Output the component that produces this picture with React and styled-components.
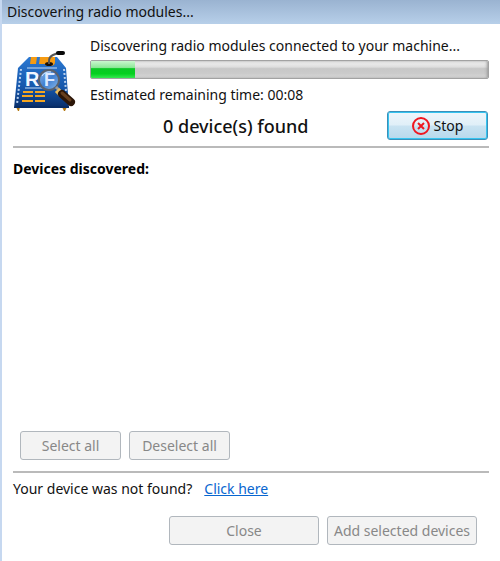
import styled, { createGlobalStyle } from 'styled-components';

const GlobalStyle = createGlobalStyle`
  * {
    box-sizing: border-box;
  }
  body {
    margin: 0;
    background: #ffffff;
    color: #111111;
    font-family: 'Noto Sans', 'Open Sans', sans-serif;
    font-size: 14px;
    line-height: 20px;
  }
`;

const Window = styled.main`
  display: flex;
  flex-direction: column;
  min-height: 100vh;
  border-left: 2px solid #c6d8f0;
`;

const TitleBar = styled.h1`
  height: 24px;
  margin: 0;
  padding: 2px 5px;
  background: linear-gradient(#9ab3d1, #b7cfe9);
  font-size: 14px;
  font-weight: normal;
  line-height: 20px;
`;

const Content = styled.div`
  display: flex;
  flex: 1;
  flex-direction: column;
  padding: 12px 11px 16px;
`;

const Status = styled.section`
  display: flex;
  gap: 13px;
  padding-bottom: 6px;
  border-bottom: 2px solid #bababa;
`;

const Logo = styled.svg`
  flex: none;
  width: 64px;
  height: 64px;
  margin-top: 13px;
`;

const Progress = styled.div`
  flex: 1;
  min-width: 0;
`;

const Label = styled.label`
  display: block;
  height: 24px;
  white-space: nowrap;
`;

const Bar = styled.progress`
  display: block;
  width: 100%;
  height: 19px;
  appearance: none;
  border: 1px solid #a2a2a2;
  border-radius: 2px;
  overflow: hidden;

  &::-webkit-progress-bar {
    background: linear-gradient(#f2f2f2 0, #dedede 35%, #c7c7c7 45%, #cbcbcb 75%, #dddddd);
    box-shadow: inset -1px 0 3px #999999;
  }
  &::-webkit-progress-value {
    background: linear-gradient(#c9f7ce 0, #8fe89a 38%, #0bc725 45%, #05d020 75%, #35e850);
  }
`;

const Remaining = styled.p`
  margin: 6px 0;
`;

const Summary = styled.div`
  display: flex;
  align-items: center;
  justify-content: space-between;
  padding: 0 1px 0 73px;
`;

const Found = styled.strong`
  font-size: 18px;
  font-weight: 500;
  line-height: 28px;
`;

const Button = styled.button`
  display: flex;
  align-items: center;
  justify-content: center;
  gap: 4px;
  width: ${({ $width }) => $width}px;
  height: 29px;
  padding: 0;
  border: 1px solid #b1b7bd;
  border-radius: 3px;
  background: #f3f3f3;
  color: #888888;
  font: inherit;
  white-space: nowrap;
`;

const StopButton = styled(Button)`
  border: 1px solid #3c8fb8;
  background: linear-gradient(#eef6fb 0, #e0eff8 48%, #c9e3f2 52%, #b7d9ec);
  box-shadow: inset 0 0 0 1px #35c4f0;
  color: #111111;
`;

const Devices = styled.section`
  display: flex;
  flex: 1;
  flex-direction: column;
  justify-content: space-between;
  padding: 11px 0 11px;
  border-bottom: 2px solid #bababa;
`;

const Heading = styled.h2`
  margin: 0;
  color: #000000;
  font-size: 14px;
  line-height: 20px;
`;

const Actions = styled.div`
  display: flex;
  gap: 8px;
  padding: 0 7px;
`;

const Help = styled.p`
  display: flex;
  gap: 12px;
  margin: 6px 0 17px;
`;

const Link = styled.a`
  color: #0866d0;
`;

const Footer = styled(Actions)`
  justify-content: flex-end;
  padding: 0 12px;
`;

const LogoIcon = () => (
  <Logo viewBox="0 0 64 64" aria-hidden="true">
    <defs>
      <linearGradient id="body" x1="0" y1="0" x2="0" y2="1">
        <stop offset="0" stopColor="#2c79d2" />
        <stop offset="0.6" stopColor="#1556aa" />
        <stop offset="1" stopColor="#092d68" />
      </linearGradient>
      <linearGradient id="lens" x1="0" y1="0" x2="1" y2="1">
        <stop offset="0" stopColor="#8fb8ea" />
        <stop offset="0.5" stopColor="#3f7fd0" />
        <stop offset="1" stopColor="#8cbbea" />
      </linearGradient>
    </defs>
    <path d="M3 58h4l-1 4H5zM49 58h5l-2 4h-1z" fill="#b57a13" />
    <path d="M16 8h28l9 11 3 40H1l4-40z" fill="url(#body)" />
    <path d="M2 57h54v2H1z" fill="#082c65" />
    <path d="M18 8h6l-1 7h-6zM27 8h15v5q0 4-5 4t-5-2h-6z" fill="#f59b12" />
    <path d="M14 19h30M12 39h18" stroke="#c5dcf5" strokeWidth="1" />
    <path d="M8 20L4 55M51 20l2 22" stroke="#b9d0ee" strokeWidth="2" strokeDasharray="2 2" />
    <text x="12" y="37" fill="#f2f6ff" fontFamily="Liberation Sans, sans-serif" fontSize="20" fontWeight="bold">R</text>
    <path
      d="M10 42h10v2H10zM22 42h10v2H22zM9 46h11v2H9zM22 46h10v2H22zM9 51h11v2H9zM22 51h10v2H22z"
      fill="#f5a51f"
    />
    <ellipse cx="36" cy="15" rx="4" ry="2" fill="#19110a" />
    <path d="M36 15v-3q0-4 4-6l5-2" fill="none" stroke="#555555" strokeWidth="2" />
    <path d="M45 4h5" stroke="#090909" strokeWidth="4" strokeLinecap="round" />
    <circle cx="36" cy="31" r="10" fill="url(#lens)" stroke="#59616d" strokeWidth="2" />
    <text x="31" y="37" fill="#dceaff" fontFamily="Liberation Sans, sans-serif" fontSize="18" fontWeight="bold">F</text>
    <path d="M29 27q3-5 9-4" fill="none" stroke="#d6e8ff" strokeWidth="1" />
    <path d="M43 38l4 4" stroke="#9b9b9b" strokeWidth="3" />
    <path d="M44 41l4 4" stroke="#e9bd61" strokeWidth="6" />
    <path d="M49 45l9 8" stroke="#2c1608" strokeWidth="8" strokeLinecap="round" />
    <path d="M49 44l8 7" stroke="#67401f" strokeWidth="3" strokeLinecap="round" />
  </Logo>
);

const StopIcon = () => (
  <svg width="18" height="18" viewBox="0 0 18 18" fill="none" stroke="#ef1720" strokeWidth="2" aria-hidden="true">
    <circle cx="9" cy="9" r="8" />
    <path d="M6 6l6 6M12 6l-6 6" />
  </svg>
);

const App = () => (
  <>
    <GlobalStyle />
    <Window>
      <TitleBar>Discovering radio modules...</TitleBar>
      <Content>
        <Status>
          <LogoIcon />
          <Progress>
            <Label htmlFor="discovery">Discovering radio modules connected to your machine...</Label>
            <Bar id="discovery" value="11" max="100" />
            <Remaining>Estimated remaining time: 00:08</Remaining>
            <Summary>
              <Found>0 device(s) found</Found>
              <StopButton type="button" $width={101}>
                <StopIcon />
                Stop
              </StopButton>
            </Summary>
          </Progress>
        </Status>
        <Devices>
          <Heading>Devices discovered:</Heading>
          <Actions>
            <Button type="button" disabled $width={101}>Select all</Button>
            <Button type="button" disabled $width={101}>Deselect all</Button>
          </Actions>
        </Devices>
        <Help>
          Your device was not found?
          <Link href="#help">Click here</Link>
        </Help>
        <Footer>
          <Button type="button" disabled $width={150}>Close</Button>
          <Button type="button" disabled $width={150}>Add selected devices</Button>
        </Footer>
      </Content>
    </Window>
  </>
);

export default App;
